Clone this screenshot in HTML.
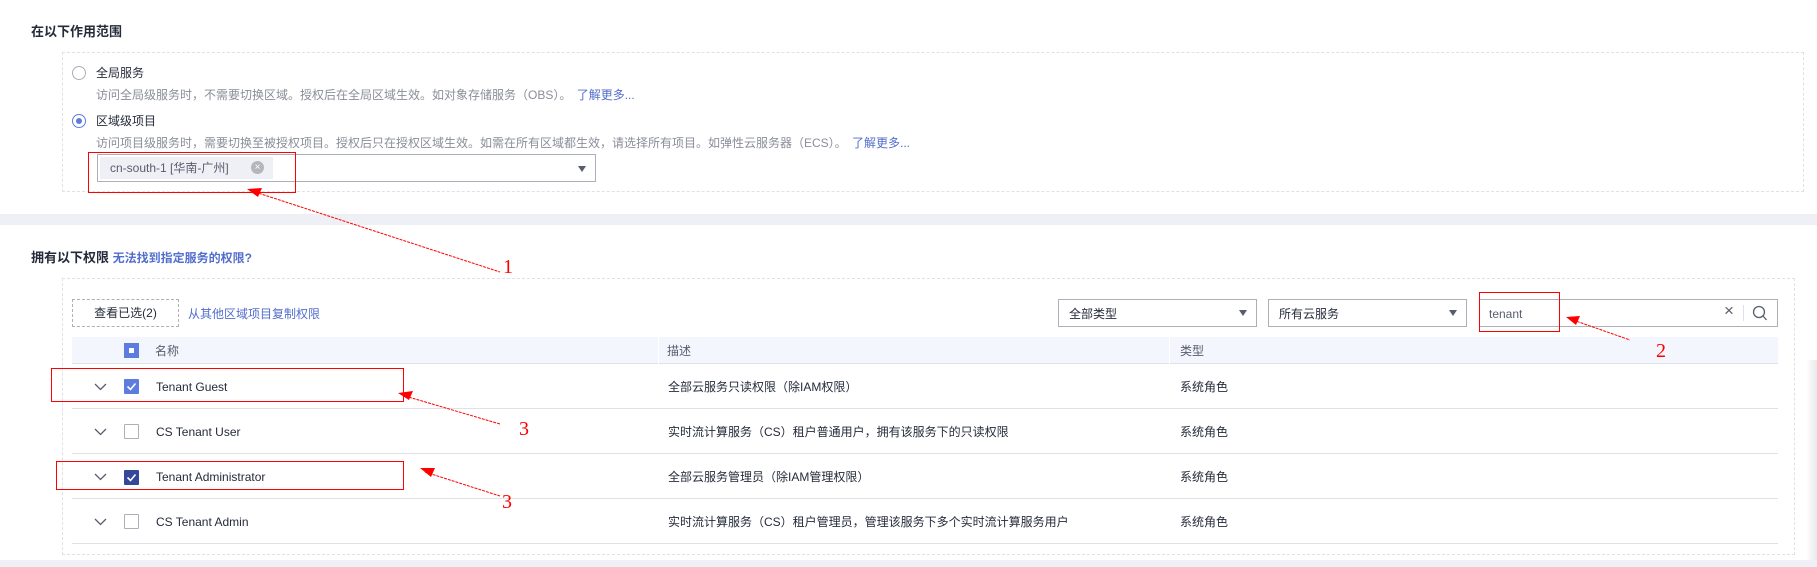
<!DOCTYPE html>
<html><head><meta charset="utf-8"><style>
*{margin:0;padding:0;box-sizing:border-box}
body{width:1817px;height:567px;position:relative;overflow:hidden;background:#fff;font-family:"Liberation Sans","Noto Sans CJK SC",sans-serif;font-size:12px;color:#252b3a;line-height:16px}
.a{position:absolute;white-space:nowrap;line-height:16px}
.t{font-weight:bold;font-size:13px;color:#252b3a}
.g{color:#8a8e99}
.b{color:#526ecc}
.dash{position:absolute;border:1px dashed #dfe1e6}
.sel{position:absolute;border:1px solid #adb0b8;height:28px;background:#fff}
.tri{position:absolute;width:0;height:0;border-left:4px solid transparent;border-right:4px solid transparent;border-top:6px solid #575d6c}
.row{position:absolute;left:72px;width:1706px;height:45px;border-bottom:1px solid #dfe1e6}
.cb{position:absolute;width:15px;height:15px;border:1px solid #adb0b8;background:#fff;border-radius:1px}
.cbk{border:none;background:#5e7ce0}
.red{position:absolute;border:1px solid #f00}
</style></head><body>
<div class="a t" style="left:31px;top:24px">在以下作用范围</div>
<div class="dash" style="left:62px;top:52px;width:1742px;height:140px"></div>
<div class="a" style="left:72px;top:66px;width:14px;height:14px;border:1px solid #adb0b8;border-radius:50%"></div>
<div class="a" style="left:96px;top:65px">全局服务</div>
<div class="a g" style="left:96px;top:87px">访问全局级服务时，不需要切换区域。授权后在全局区域生效。如对象存储服务（OBS）。 <span class="b" style="margin-left:2px">了解更多...</span></div>
<div class="a" style="left:72px;top:114px;width:14px;height:14px;border:1px solid #5e7ce0;border-radius:50%"><div style="position:absolute;left:3px;top:3px;width:6px;height:6px;border-radius:50%;background:#5e7ce0"></div></div>
<div class="a" style="left:96px;top:113px">区域级项目</div>
<div class="a g" style="left:96px;top:135px">访问项目级服务时，需要切换至被授权项目。授权后只在授权区域生效。如需在所有区域都生效，请选择所有项目。如弹性云服务器（ECS）。 <span class="b" style="margin-left:2px">了解更多...</span></div>
<div class="sel" style="left:97px;top:154px;width:499px"></div>
<div class="a" style="left:100px;top:157px;width:173px;height:22px;background:#eef0f5"></div>
<div class="a" style="left:110px;top:160px;color:#575d6c">cn-south-1 [华南-广州]</div>
<div class="a" style="left:251px;top:161px;width:13px;height:13px;border-radius:50%;background:#b3b6bd;color:#fff;font-size:10px;line-height:13px;text-align:center">×</div>
<div class="tri" style="left:578px;top:166px"></div>
<div class="red" style="left:88px;top:152px;width:208px;height:41px"></div>

<div class="a" style="left:0;top:214px;width:1817px;height:11px;background:#eef0f5"></div>

<div class="a t" style="left:31px;top:250px">拥有以下权限 <span class="b" style="font-size:12px">无法找到指定服务的权限?</span></div>
<div class="dash" style="left:62px;top:278px;width:1733px;height:277px"></div>
<div class="a" style="left:72px;top:299px;width:107px;height:28px;border:1px dashed #adb0b8;text-align:center;line-height:26px">查看已选(2)</div>
<div class="a b" style="left:188px;top:306px">从其他区域项目复制权限</div>
<div class="sel" style="left:1058px;top:299px;width:199px"><span class="a" style="left:10px;top:6px">全部类型</span></div>
<div class="tri" style="left:1239px;top:310px"></div>
<div class="sel" style="left:1268px;top:299px;width:199px"><span class="a" style="left:10px;top:6px">所有云服务</span></div>
<div class="tri" style="left:1449px;top:310px"></div>
<div class="sel" style="left:1479px;top:299px;width:299px"><span class="a" style="left:9px;top:6px;color:#575d6c">tenant</span></div>
<div class="a" style="left:1724px;top:303px;font-size:17px;color:#575d6c">×</div>
<div class="a" style="left:1743px;top:305px;width:1px;height:16px;background:#dfe1e6"></div>
<svg class="a" style="left:1752px;top:305px" width="16" height="17" viewBox="0 0 16 17"><circle cx="7" cy="7" r="5.5" fill="none" stroke="#575d6c" stroke-width="1.3"/><path d="M11 11L14.5 15" stroke="#575d6c" stroke-width="1.3"/></svg>
<div class="red" style="left:1479px;top:292px;width:81px;height:40px"></div>

<div class="a" style="left:72px;top:337px;width:1706px;height:27px;background:#f3f6fd;border-bottom:1px solid #dfe1e6"></div>
<div class="a" style="left:658px;top:337px;width:1px;height:27px;background:#fff"></div>
<div class="a" style="left:1169px;top:337px;width:1px;height:27px;background:#fff"></div>
<div class="a" style="left:124px;top:343px;width:15px;height:15px;background:#5e7ce0"><div style="position:absolute;left:5px;top:5px;width:5px;height:5px;background:#fff"></div></div>
<div class="a" style="left:155px;top:343px;color:#575d6c">名称</div>
<div class="a" style="left:667px;top:343px;color:#575d6c">描述</div>
<div class="a" style="left:1180px;top:343px;color:#575d6c">类型</div>

<div class="row" style="top:364px"></div>
<div class="row" style="top:409px"></div>
<div class="row" style="top:454px"></div>
<div class="row" style="top:499px"></div>

<svg class="a" style="left:94px;top:383px" width="13" height="150" viewBox="0 0 13 150"><g fill="none" stroke="#575d6c" stroke-width="1.3"><path d="M1 1L6.5 6.5L12 1"/><path d="M1 46L6.5 51.5L12 46"/><path d="M1 91L6.5 96.5L12 91"/><path d="M1 136L6.5 141.5L12 136"/></g></svg>

<div class="cb cbk" style="left:124px;top:379px"><svg width="15" height="15"><path d="M3.5 7.5L6.5 10.5L11.5 4.5" fill="none" stroke="#fff" stroke-width="1.6"/></svg></div>
<div class="cb" style="left:124px;top:424px"></div>
<div class="cb cbk" style="left:124px;top:470px;background:#344899"><svg width="15" height="15"><path d="M3.5 7.5L6.5 10.5L11.5 4.5" fill="none" stroke="#fff" stroke-width="1.6"/></svg></div>
<div class="cb" style="left:124px;top:514px"></div>

<div class="a" style="left:156px;top:379px">Tenant Guest</div>
<div class="a" style="left:156px;top:424px">CS Tenant User</div>
<div class="a" style="left:156px;top:469px">Tenant Administrator</div>
<div class="a" style="left:156px;top:514px">CS Tenant Admin</div>
<div class="a" style="left:668px;top:379px">全部云服务只读权限（除IAM权限）</div>
<div class="a" style="left:668px;top:424px">实时流计算服务（CS）租户普通用户，拥有该服务下的只读权限</div>
<div class="a" style="left:668px;top:469px">全部云服务管理员（除IAM管理权限）</div>
<div class="a" style="left:668px;top:514px">实时流计算服务（CS）租户管理员，管理该服务下多个实时流计算服务用户</div>
<div class="a" style="left:1180px;top:379px">系统角色</div>
<div class="a" style="left:1180px;top:424px">系统角色</div>
<div class="a" style="left:1180px;top:469px">系统角色</div>
<div class="a" style="left:1180px;top:514px">系统角色</div>

<div class="red" style="left:51px;top:368px;width:353px;height:34px"></div>
<div class="red" style="left:56px;top:461px;width:348px;height:29px"></div>
<div class="a" style="left:1806px;top:360px;width:11px;height:207px;background:linear-gradient(90deg,#fff,#e8e9ec)"></div>
<div class="a" style="left:0;top:560px;width:1817px;height:7px;background:#eef0f5"></div>

<svg class="a" style="left:0;top:0" width="1817" height="567"><g stroke="#f00" stroke-width="1" stroke-dasharray="3,1" fill="none"><path d="M255 192L500 272"/><path d="M405 396L500 424"/><path d="M425 472L500 496"/><path d="M1573 320L1630 340"/></g><g fill="#f00"><path d="M247 189L262 188L258 197Z"/><path d="M398 393L413 391L409 400Z"/><path d="M420 468L435 468L431 477Z"/><path d="M1566 317L1580 316L1576 325Z"/></g><g font-family="Liberation Serif,serif" font-size="20" fill="#f00"><text x="503" y="273">1</text><text x="519" y="435">3</text><text x="502" y="508">3</text><text x="1656" y="357">2</text></g></svg>
</body></html>
